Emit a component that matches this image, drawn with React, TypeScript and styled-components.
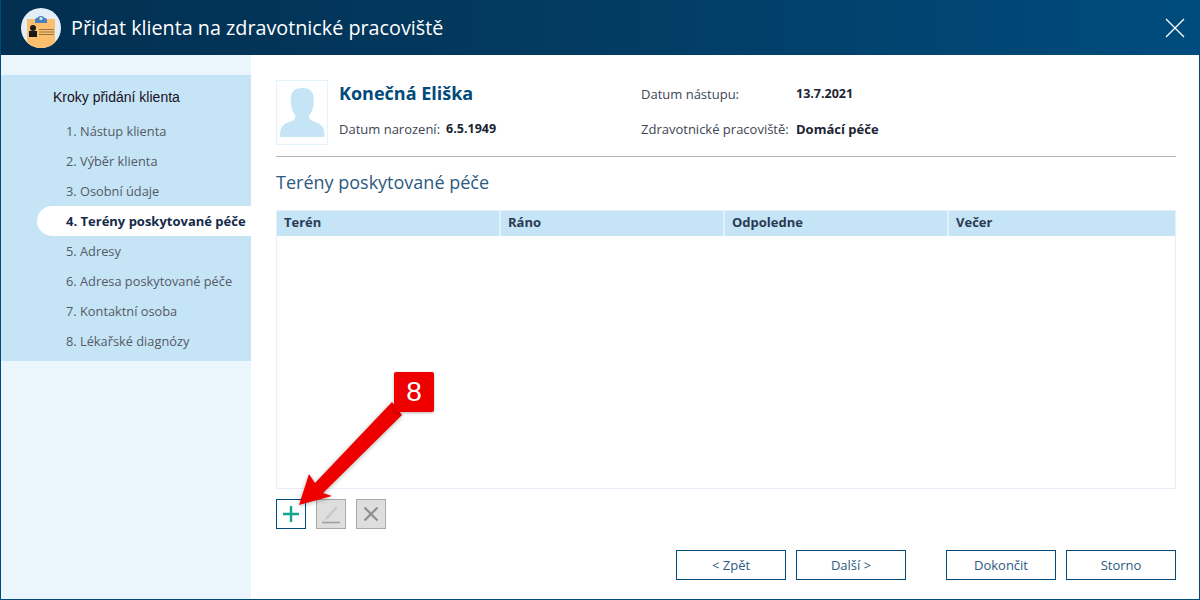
import React from 'react'
import styled, { createGlobalStyle } from 'styled-components'

const GlobalStyle = createGlobalStyle`
  html, body {
    margin: 0;
    padding: 0;
    background: #fff;
  }
  * {
    box-sizing: border-box;
  }
`

const Dialog = styled.div`
  position: relative;
  width: 1200px;
  height: 600px;
  display: flex;
  flex-direction: column;
  border: 1px solid #004a7c;
  border-top: 0;
  font-family: 'Open Sans', sans-serif;
  overflow: hidden;
  background: #fff;
`

const TitleBar = styled.div`
  height: 55px;
  flex: none;
  margin: 0 -1px;
  display: flex;
  align-items: center;
  padding: 0 14px 0 21px;
  background: linear-gradient(90deg, #022f50 0%, #033a60 45%, #004c7e 100%);
`

const Title = styled.div`
  margin-left: 10px;
  flex: 1;
  font-size: 19.75px;
  color: #fff;
  white-space: nowrap;
`

const CloseButton = styled.div`
  width: 20px;
  height: 20px;
  margin-right: 1px;
  display: flex;
`

const Body = styled.div`
  flex: 1;
  display: flex;
  min-height: 0;
`

const Sidebar = styled.div`
  width: 250px;
  flex: none;
  padding-top: 20px;
  background: #eaf6fc;
`

const StepsBlock = styled.div`
  height: 286px;
  padding: 13px 0 0 36px;
  background: #c5e4f6;
`

const StepsHeading = styled.div`
  height: 18px;
  margin: 0 0 10px 16px;
  font-family: 'Liberation Sans', Arial, sans-serif;
  font-size: 14px;
  line-height: 18px;
  color: #1a1020;
`

const Step = styled.div<{ $active?: boolean }>`
  height: 30px;
  padding-left: 29px;
  font-size: ${props => (props.$active ? '13px' : '12.8px')};
  line-height: 30px;
  white-space: nowrap;
  font-weight: ${props => (props.$active ? 700 : 400)};
  color: ${props => (props.$active ? '#152a4a' : '#555a66')};
  background: ${props => (props.$active ? '#fff' : 'transparent')};
  border-radius: ${props => (props.$active ? '15px 0 0 15px' : '0')};
`

const Main = styled.div`
  flex: 1;
  display: flex;
  flex-direction: column;
  padding: 25px 23px 19px 25px;
  min-width: 0;
`

const ClientInfo = styled.div`
  height: 77px;
  flex: none;
  display: flex;
  border-bottom: 1px solid #b4b4b4;
`

const Avatar = styled.div`
  width: 52px;
  height: 65px;
  flex: none;
  display: flex;
  align-items: flex-end;
  justify-content: center;
  padding-bottom: 7px;
  border: 1px solid #e3f2fb;
`

const NameColumn = styled.div`
  width: 302px;
  margin-left: 11px;
  flex: none;
`

const ClientName = styled.div`
  height: 26px;
  font-size: 18px;
  font-weight: 700;
  line-height: 26px;
  color: #004a7c;
`

const FieldLine = styled.div`
  display: flex;
  height: 20px;
  font-size: 13px;
  line-height: 20px;
  color: #3c4654;
  white-space: nowrap;
`

const FieldLabel = styled.span<{ $width?: number }>`
  width: ${props => (props.$width ? `${props.$width}px` : 'auto')};
  flex: none;
`

const FieldValue = styled.span<{ $gap?: number; $size?: number }>`
  margin-left: ${props => props.$gap ?? 8}px;
  font-size: ${props => props.$size ?? 13}px;
  font-weight: 700;
  color: #1b2433;
`

const BirthLine = styled(FieldLine)`
  margin-top: 13px;
`

const DatesColumn = styled.div`
  flex: 1;
  padding-top: 4px;
`

const DatesGap = styled.div`
  height: 15px;
`

const SectionTitle = styled.div`
  height: 53px;
  flex: none;
  padding-top: 12px;
  font-size: 18px;
  line-height: 26px;
  color: #2d5a80;
`

const Table = styled.div`
  flex: none;
  height: 279px;
  border: 1px solid #e6effa;
`

const TableHead = styled.div`
  height: 25px;
  display: grid;
  grid-template-columns: 222px 224px 224px 1fr;
  background: #c5e4f6;
`

const HeadCell = styled.div`
  padding-left: 7px;
  font-size: 13px;
  font-weight: 700;
  line-height: 22px;
  color: #2b3b55;
  border-left: 2px solid #e3eff9;

  &:first-child {
    border-left: 0;
  }
`

const TableTools = styled.div`
  display: flex;
  gap: 10px;
  margin-top: 10px;
`

const ToolButton = styled.div<{ $enabled?: boolean }>`
  width: 30px;
  height: 30px;
  display: flex;
  align-items: center;
  justify-content: center;
  border: 1px solid ${props => (props.$enabled ? '#004a7c' : '#a8a8a8')};
  background: ${props => (props.$enabled ? '#fff' : '#dedede')};
`

const Footer = styled.div`
  display: flex;
  justify-content: flex-end;
  gap: 10px;
  margin-top: 21px;
`

const FooterButton = styled.div<{ $spaced?: boolean }>`
  width: 110px;
  height: 30px;
  margin-left: ${props => (props.$spaced ? '30px' : '0')};
  border: 1px solid #004a7c;
  font-size: 13px;
  line-height: 29px;
  text-align: center;
  color: #2d5a80;
`

const Callout = styled.div`
  position: absolute;
  left: 393px;
  top: 372px;
  width: 40px;
  height: 40px;
  border-radius: 2px;
  background: #ee0000;
  box-shadow: 0 1px 3px rgba(0, 0, 0, 0.3);
  font-family: 'Liberation Sans', Arial, sans-serif;
  font-size: 28px;
  line-height: 40px;
  text-align: center;
  color: #fff;
`

const ArrowOverlay = styled.svg`
  position: absolute;
  left: 289px;
  top: 395px;
  width: 130px;
  height: 115px;
  overflow: visible;
  filter: drop-shadow(0 1px 2px rgba(0, 0, 0, 0.3));
`

const Logo = () => (
  <svg width="40" height="40" viewBox="0 0 40 40">
    <defs>
      <clipPath id="logo-circle">
        <circle cx="20" cy="20" r="20" />
      </clipPath>
    </defs>
    <circle cx="20" cy="20" r="20" fill="#e4eef7" />
    <path d="M6 11h28v29H6z" fill="#fbbf6e" clipPath="url(#logo-circle)" />
    <path d="M14 15v-3c0-1.500 1-2 2.500-2 .8-2.700 6.200-2.700 7 0 1.500 0 2.500.5 2.500 2v3z" fill="#4a80bf" />
    <circle cx="20" cy="10.500" r="1.600" fill="#dbe8f4" />
    <circle cx="12" cy="20" r="3" fill="#1a1a1a" />
    <path d="M8 23h8v6H8z" fill="#1a1a1a" />
    <path d="M18 21h15v1H18zM18 23.500h15v1H18zM18 26h15v1H18z" fill="#94733f" />
  </svg>
)

const CloseIcon = () => (
  <svg width="20" height="20" viewBox="0 0 20 20">
    <path d="M1 1l18 18M19 1L1 19" stroke="#fff" strokeWidth="1.300" fill="none" />
  </svg>
)

const Silhouette = () => (
  <svg width="45" height="49" viewBox="0 0 46 50">
    <path
      d="M23 0c7 0 11 3 11.500 10 .3 4-.3 8-1 11-.8 3-2 5-3.500 7-.8 2 0 4 3 5.500 4 1.800 9 3 11 7 1 2 1.500 5 1.500 9.500H0c0-4.500.500-7.500 1.500-9.500 2-4 7-5.200 11-7 3-1.500 3.800-3.500 3-5.500-1.500-2-2.700-4-3.500-7-.7-3-1.300-7-1-11C11.500 3 16 0 23 0z"
      fill="#c5e4f6"
    />
  </svg>
)

const steps = [
  '1. Nástup klienta',
  '2. Výběr klienta',
  '3. Osobní údaje',
  '4. Terény poskytované péče',
  '5. Adresy',
  '6. Adresa poskytované péče',
  '7. Kontaktní osoba',
  '8. Lékařské diagnózy',
]

const columns = ['Terén', 'Ráno', 'Odpoledne', 'Večer']

export default function App() {
  return (
    <>
      <GlobalStyle />
      <Dialog>
        <TitleBar>
          <Logo />
          <Title>Přidat klienta na zdravotnické pracoviště</Title>
          <CloseButton>
            <CloseIcon />
          </CloseButton>
        </TitleBar>
        <Body>
          <Sidebar>
            <StepsBlock>
              <StepsHeading>Kroky přidání klienta</StepsHeading>
              {steps.map((step, i) => (
                <Step key={step} $active={i === 3}>
                  {step}
                </Step>
              ))}
            </StepsBlock>
          </Sidebar>
          <Main>
            <ClientInfo>
              <Avatar>
                <Silhouette />
              </Avatar>
              <NameColumn>
                <ClientName>Konečná Eliška</ClientName>
                <BirthLine>
                  <FieldLabel>Datum narození:</FieldLabel>
                  <FieldValue $gap={6} $size={12.5}>
                    6.5.1949
                  </FieldValue>
                </BirthLine>
              </NameColumn>
              <DatesColumn>
                <FieldLine>
                  <FieldLabel $width={147}>Datum nástupu:</FieldLabel>
                  <FieldValue $size={12.5}>13.7.2021</FieldValue>
                </FieldLine>
                <DatesGap />
                <FieldLine>
                  <FieldLabel $width={147}>Zdravotnické pracoviště:</FieldLabel>
                  <FieldValue>Domácí péče</FieldValue>
                </FieldLine>
              </DatesColumn>
            </ClientInfo>
            <SectionTitle>Terény poskytované péče</SectionTitle>
            <Table>
              <TableHead>
                {columns.map(col => (
                  <HeadCell key={col}>{col}</HeadCell>
                ))}
              </TableHead>
            </Table>
            <TableTools>
              <ToolButton $enabled>
                <svg width="18" height="18" viewBox="0 0 18 18">
                  <path d="M9 1v16M1 9h16" stroke="#0fa58c" strokeWidth="2.400" fill="none" />
                </svg>
              </ToolButton>
              <ToolButton>
                <svg width="20" height="20" viewBox="0 0 20 20">
                  <path d="M5 13L15 2l2 1.500L7 15l-3 1z" fill="#c9c9c9" />
                  <path d="M1 18.500h18" stroke="#a0a0a0" strokeWidth="1.600" />
                </svg>
              </ToolButton>
              <ToolButton>
                <svg width="16" height="16" viewBox="0 0 16 16">
                  <path d="M1.500 1.500l13 13M14.500 1.500l-13 13" stroke="#8f8f8f" strokeWidth="2.200" fill="none" />
                </svg>
              </ToolButton>
            </TableTools>
            <Footer>
              <FooterButton>&lt; Zpět</FooterButton>
              <FooterButton>Další &gt;</FooterButton>
              <FooterButton $spaced>Dokončit</FooterButton>
              <FooterButton>Storno</FooterButton>
            </Footer>
          </Main>
        </Body>
        <ArrowOverlay viewBox="0 0 130 115">
          <path d="M9 110L19 79l6 9 77-81 10 13-79 78 9 3z" fill="#ee0000" />
        </ArrowOverlay>
        <Callout>8</Callout>
      </Dialog>
    </>
  )
}
